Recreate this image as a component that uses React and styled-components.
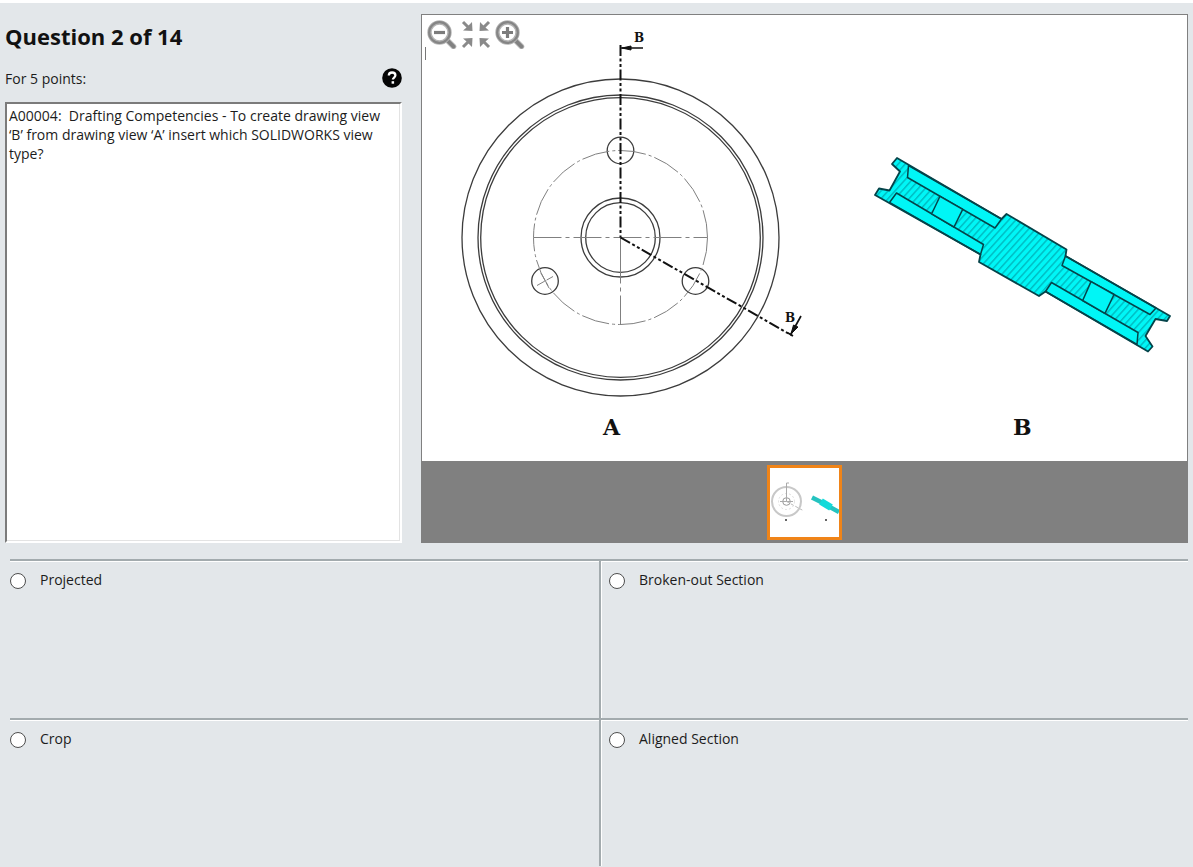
import React, { useState } from 'react'
import styled, { createGlobalStyle } from 'styled-components'

const GlobalStyle = createGlobalStyle`
  body {
    margin: 0;
    background: #e3e7ea;
    color: #1c1c1c;
    font-family: "Open Sans", "Noto Sans", sans-serif;
    font-size: 14px;
    line-height: 19px;
  }
  * {
    box-sizing: border-box;
  }
`

const Page = styled.main`
  display: flex;
  flex-direction: column;
  min-height: 100vh;
  padding: 11px 5px 0;
  border-top: 3px solid #fff;
`

const Top = styled.section`
  display: grid;
  grid-template-columns: minmax(0, 397fr) minmax(0, 767fr);
  gap: 19px;
`

const Prompt = styled.div`
  display: flex;
  flex-direction: column;
`

const Title = styled.h1`
  margin: 8px 0 16px;
  font-size: 22px;
  line-height: 28px;
  font-weight: 700;
  color: #111;
`

const PointsRow = styled.div`
  display: flex;
  align-items: center;
  justify-content: space-between;
  height: 24px;
  margin-bottom: 12px;
`

const HelpButton = styled.button`
  display: flex;
  padding: 0;
  border: 0;
  background: none;
`

const QuestionText = styled.textarea`
  flex: 1;
  width: 100%;
  padding: 2px 14px 2px 2px;
  border: 2px solid;
  border-color: #7b7b7b #fff #fff #7b7b7b;
  outline: 0;
  resize: none;
  background: #fff;
  box-shadow: inset -1px -1px 0 #e3e3e3;
  color: inherit;
  font: inherit;
`

const Viewer = styled.div`
  position: relative;
  border: 1px solid #808080;
  background: #fff;
`

const Tools = styled.div`
  position: absolute;
  top: 4px;
  left: 5px;
  display: flex;
  gap: 4px;
`

const ToolButton = styled.button`
  display: flex;
  padding: 0;
  border: 0;
  background: none;
`

const DrawingSvg = styled.svg`
  display: block;
  width: 100%;
  height: auto;
  font-family: "DejaVu Serif", serif;
  font-weight: 700;
`

const Filmstrip = styled.div`
  display: flex;
  justify-content: center;
  padding: 4px 0 2px;
  background: #808080;
`

const Thumb = styled.button`
  display: flex;
  width: 75px;
  height: 75px;
  padding: 0;
  border: 3px solid #f08418;
  background: #fff;
`

const Answers = styled.fieldset`
  flex: 1;
  display: grid;
  grid-template-columns: 1fr 1fr;
  grid-template-rows: 159px minmax(148px, 1fr);
  margin: 16px 0 0 5px;
  padding: 0;
  border: 0;
  min-width: 0;
`

const Answer = styled.label`
  display: flex;
  align-items: flex-start;
  gap: 14px;
  padding: 9px 0 0 ${p => (p.$divided ? 8 : 0)}px;
  border-top: 2px solid #a3abae;
  border-left: ${p => (p.$divided ? '2px solid #a3abae' : '0')};
  box-shadow: inset ${p => (p.$divided ? 1 : 0)}px 1px 0 #fff;
`

const Radio = styled.input`
  appearance: none;
  flex: none;
  width: 16px;
  height: 16px;
  margin: 3px 0 0;
  border: 1px solid #4e4e4e;
  border-radius: 50%;
  background: #fff;
  &:checked {
    background: radial-gradient(#333 4px, #fff 5px);
  }
`

const HelpIcon = () => (
  <svg width="20" height="20" viewBox="0 0 20 20">
    <circle cx="10" cy="10" r="9.8" fill="#050505" />
    <path d="M6.8 7.6c0-2 1.3-3.1 3.3-3.1s3.3 1.1 3.3 2.8c0 2.2-2.5 2.2-2.5 4.2" fill="none" stroke="#fff" strokeWidth="2.3" />
    <rect x="9.6" y="13.2" width="2.5" height="2.5" fill="#fff" />
  </svg>
)

const Magnifier = ({ plus }) => (
  <svg width="30" height="30" viewBox="0 0 30 30" fill="none">
    <path d="M19.5 20.5L26.5 27.5" stroke="#b4b4b4" strokeWidth="5.5" strokeLinecap="round" />
    <path d="M19 20L26.5 27.5" stroke="#818181" strokeWidth="3.8" strokeLinecap="round" />
    <circle cx="12.5" cy="13.5" r="10" fill="#fff" stroke="#b4b4b4" strokeWidth="4.4" />
    <circle cx="12.5" cy="13.5" r="10.3" stroke="#858585" strokeWidth="2.2" />
    <path d={plus ? 'M7 13.5h11M12.5 8v11' : 'M7 13.5h11'} stroke="#7c7c7c" strokeWidth="3.2" />
  </svg>
)

const FitIcon = () => (
  <svg width="30" height="30" viewBox="0 0 30 30" fill="#8a8a8a" stroke="#8a8a8a" strokeWidth="3">
    {[[1, 1], [-1, 1], [1, -1], [-1, -1]].map(([x, y]) => (
      <g key={`${x}${y}`} transform={`translate(15 15.5) scale(${x} ${y})`}>
        <path d="M-13 -12.5L-7 -6.5" />
        <path d="M-3.5 -3.5L-4 -12.5L-7 -9.5L-10 -6.5L-13 -4Z" stroke="none" />
      </g>
    ))}
  </svg>
)

const OUTLINE = `M897 158L892 164L900 171.5L889.5 190.5L879 188.5L875 195
  L980.5 254.5L979 262L1039 296L1045.5 291.5L1148 351.5L1152.5 346.5L1145.5 336
  L1155.5 319L1167 321L1170 316L1065.5 256L1066.5 249.5L1006.5 214L1001.5 219Z`

// ribs and bolt holes, the parts the cut doesn't hatch
const PLAIN = [
  'M908.5 165.5L907.5 177.5L995 228L1001.5 219Z',
  'M889.5 202.5L896.5 193L983.5 244.5L980.5 254.5Z',
  'M940 196.3L931.7 213.8L954 227L962.7 209.4Z',
  'M1065.5 256L1062 265.5L1150 314.5L1156 308Z',
  'M1045.5 291.5L1051.5 282.5L1138 332.5L1137 344.5Z',
  'M1091 281.6L1082.7 300.5L1105 313.4L1114 294.5Z'
]

const Drawing = () => (
  <DrawingSvg viewBox="422 15 765 446" role="img" aria-label="Drawing views A and B">
    <defs>
      <pattern id="hatch" width="5.2" height="5.2" patternUnits="userSpaceOnUse" patternTransform="rotate(42)">
        <rect width="5.2" height="5.2" fill="#00f6f6" />
        <path d="M2.5 0V5.2" stroke="#00a0a8" strokeWidth="1" />
      </pattern>
    </defs>
    <path d="M425.5 47V60" stroke="#777" />
    <g fill="none" stroke="#3c3c3c" strokeWidth="1.3">
      <circle cx="620.5" cy="237.5" r="158.5" />
      <circle cx="620.5" cy="237.5" r="142.5" />
      <circle cx="620.5" cy="237.5" r="139.8" />
      <circle cx="620.5" cy="237.5" r="39.5" />
      <circle cx="620.5" cy="237.5" r="34.8" />
      <circle cx="620.5" cy="150.5" r="13.3" />
      <circle cx="545" cy="281" r="13.3" />
      <circle cx="695.5" cy="281" r="13.3" />
    </g>
    <g fill="none" stroke="#808080" strokeWidth="1">
      <circle cx="620.5" cy="237.5" r="87" strokeDasharray="28 3 3 3" />
      <path d="M533.5 237.5H707.5" strokeDasharray="28 4 4 4" />
      <path d="M620.5 237.5V325" strokeDasharray="46 4 4 4" />
      <path d="M537 285.500L553 276.500M541 273L549 288" strokeDasharray="9 2" />
    </g>
    <g fill="none" stroke="#111" strokeWidth="2" strokeDasharray="11 2.5 3 2.5 3 2.5">
      <path d="M620.5 45V237.5" />
      <path d="M620.5 237.5L792 335.5" />
    </g>
    <g stroke="#111" strokeWidth="1.7" fill="#111">
      <path d="M621 48H643M801 316L791 334M788 333L793 336" />
      <path d="M622 48L631 46V50ZM791 334L793.5 325L798 327Z" strokeWidth="1" />
    </g>
    <path d={OUTLINE} fill="url(#hatch)" />
    <g fill="#00f6f6" stroke="#05444a" strokeWidth="1.5" strokeLinejoin="round">
      {PLAIN.map(d => <path key={d} d={d} />)}
      <path d={OUTLINE} fill="none" strokeWidth="1.8" />
    </g>
    <g fill="#111">
      <text x="634" y="42" fontSize="12">B</text>
      <text x="785" y="322" fontSize="12">B</text>
      <text x="603" y="435" fontSize="22">A</text>
      <text x="1013" y="435" fontSize="22">B</text>
    </g>
  </DrawingSvg>
)

const ThumbDrawing = () => (
  <svg width="69" height="69" viewBox="0 0 69 69" fill="none">
    <circle cx="16.5" cy="33.5" r="14.5" stroke="#c8c8c8" strokeWidth="2" />
    <circle cx="16.5" cy="33.5" r="8" stroke="#ddd" strokeDasharray="2 2" />
    <circle cx="16.5" cy="33.5" r="3.8" stroke="#999" />
    <path d="M16.5 15V34M10 33.5H23M16.5 15H19" stroke="#aaa" />
    <path d="M16.5 33.5L34 43" stroke="#bbb" strokeDasharray="3 2" />
    <path d="M42 29.5L53 35M58 38L69 44" stroke="#25c3c0" strokeWidth="4.5" />
    <path d="M51 33.5L61 39.5" stroke="#12dada" strokeWidth="7" />
    <path d="M15 52h2M55 52h2" stroke="#666" strokeWidth="2" />
  </svg>
)

const QUESTION = 'A00004:  Drafting Competencies - To create drawing view ‘B’ from drawing view ‘A’ insert which SOLIDWORKS view type?'
const ANSWERS = ['Projected', 'Broken-out Section', 'Crop', 'Aligned Section']

export default function App() {
  const [picked, setPicked] = useState(null)
  return (
    <Page>
      <GlobalStyle />
      <Top>
        <Prompt>
          <Title>Question 2 of 14</Title>
          <PointsRow>
            <label htmlFor="question">For 5 points:</label>
            <HelpButton aria-label="Help"><HelpIcon /></HelpButton>
          </PointsRow>
          <QuestionText id="question" readOnly value={QUESTION} />
        </Prompt>
        <Viewer>
          <Drawing />
          <Tools>
            <ToolButton aria-label="Zoom out"><Magnifier /></ToolButton>
            <ToolButton aria-label="Fit"><FitIcon /></ToolButton>
            <ToolButton aria-label="Zoom in"><Magnifier plus /></ToolButton>
          </Tools>
          <Filmstrip>
            <Thumb aria-label="Drawing 1"><ThumbDrawing /></Thumb>
          </Filmstrip>
        </Viewer>
      </Top>
      <Answers aria-label="Answers">
        {ANSWERS.map((text, i) => (
          <Answer key={text} $divided={i % 2 === 1}>
            <Radio
              type="radio"
              name="answer"
              checked={picked === i}
              onChange={() => setPicked(i)}
            />
            {text}
          </Answer>
        ))}
      </Answers>
    </Page>
  )
}
